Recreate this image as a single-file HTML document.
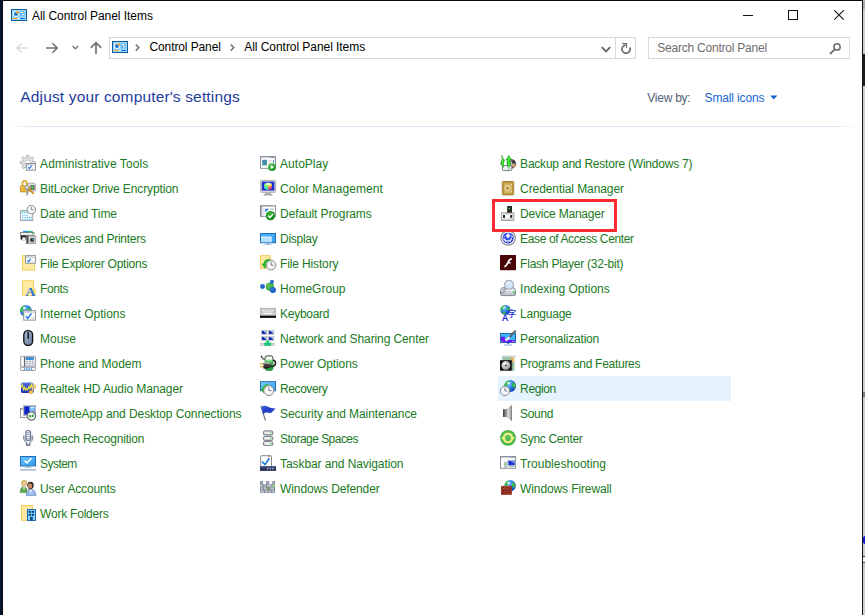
<!DOCTYPE html>
<html lang="en"><head><meta charset="utf-8"><title>All Control Panel Items</title>
<style>
html,body{margin:0;padding:0}
body{width:865px;height:615px;overflow:hidden;background:#fff;position:relative;font-family:"Liberation Sans", sans-serif;font-size:12px;line-height:16px;color:#000}
.abs,.t,.ic,.lbl{position:absolute}
.t,.lbl{white-space:nowrap}
.lbl{color:#1a7a24;height:16px}
.ic{width:16px;height:16px;overflow:visible}
svg{display:block;overflow:visible}
.box{position:absolute;box-sizing:border-box;border:1px solid #d9d9d9;background:#fff}

</style></head><body>
<div class="abs" style="left:0;top:0;width:2px;height:615px;background:#03142e"></div>
<div class="abs" style="left:2px;top:0;width:1px;height:615px;background:#0b0b0b"></div>
<div class="abs" style="left:2px;top:0;width:861px;height:1px;background:#0b0b0b"></div>
<div class="abs" style="left:862px;top:0;width:1px;height:615px;background:#151515"></div>
<div class="abs" style="left:863px;top:0;width:2px;height:615px;background:#cfcfcf"></div>
<div class="abs" style="left:863px;top:0;width:2px;height:9px;background:#a9a9a9"></div>
<div class="abs" style="left:863px;top:54px;width:2px;height:32px;background:#1c1e1c"></div>
<div class="abs" style="left:863px;top:392px;width:2px;height:5px;background:#7d7d7d"></div>
<div class="abs" style="left:863px;top:536px;width:2px;height:8px;background:#1414c8;border-radius:2px 0 0 2px"></div>
<div class="abs" style="left:863px;top:556px;width:2px;height:7px;background:#e8efe8;border-top:1px solid #155a22;border-bottom:1px solid #155a22;box-sizing:border-box"></div>
<div class="ic" style="left:11px;top:9px;height:12px"><svg width="16" height="12" viewBox="0 0 16 12"><rect x="0.5" y="0.5" width="15" height="11" fill="#8ed3fb" stroke="#0c5d9c"/><rect x="1.3" y="1.3" width="13.4" height="9.4" fill="none" stroke="#a8defc" stroke-width="0.6"/><circle cx="5" cy="4.9" r="2.9" fill="#f2f8fd"/><circle cx="5" cy="5" r="2" fill="#1b78d8"/><path d="M5.4 4.6V1.9a2.8 2.8 0 0 1 2.7 2.7z" fill="#ffa41c"/><rect x="8.8" y="2.2" width="4.8" height="4.6" fill="#6dbdf4"/><rect x="9.8" y="3" width="2.2" height="0.9" fill="#fff"/><rect x="12" y="3" width="1" height="0.9" fill="#ffa41c"/><rect x="10.6" y="5" width="2.4" height="0.9" fill="#fff"/><rect x="9.8" y="5" width="0.8" height="0.9" fill="#2a6cb8"/><rect x="2" y="9" width="5" height="1" fill="#ffa41c"/><rect x="7" y="9" width="2" height="1" fill="#fff"/><rect x="9" y="9" width="4.8" height="1" fill="#0f6ad4"/></svg></div>
<div class="t" style="left:32px;top:8px;letter-spacing:-0.053px">All Control Panel Items</div>
<svg class="abs" style="left:738px;top:5px" width="112" height="22" viewBox="738 5 112 22"><g stroke="#111" stroke-width="1" fill="none" shape-rendering="crispEdges"><path d="M743 15.5h10"/><rect x="788.5" y="10.5" width="9" height="9"/></g><path d="M834.3 10.3l9.4 9.4M843.7 10.3l-9.4 9.4" stroke="#111" stroke-width="1.1" fill="none"/></svg>
<svg class="abs" style="left:10px;top:38px" width="96" height="20" viewBox="10 38 96 20" fill="none" stroke-linecap="butt"><path d="M28 48H17.2M21.6 43.2L16.8 48l4.8 4.8" stroke="#dcdde0" stroke-width="1.5"/><path d="M46 48h10.8M52.4 43.2l4.8 4.8-4.8 4.8" stroke="#707070" stroke-width="1.5"/><path d="M72.6 46l2.8 2.8 2.8-2.8" stroke="#7a7a7a" stroke-width="1.3"/><path d="M96 54V43M90.8 47.9L96 42.7l5.2 5.2" stroke="#757575" stroke-width="1.75"/></svg>
<div class="box" style="left:109px;top:37px;width:527px;height:22px"></div>
<div class="ic" style="left:112px;top:41px;height:12px"><svg width="16" height="12" viewBox="0 0 16 12"><rect x="0.5" y="0.5" width="15" height="11" fill="#8ed3fb" stroke="#0c5d9c"/><rect x="1.3" y="1.3" width="13.4" height="9.4" fill="none" stroke="#a8defc" stroke-width="0.6"/><circle cx="5" cy="4.9" r="2.9" fill="#f2f8fd"/><circle cx="5" cy="5" r="2" fill="#1b78d8"/><path d="M5.4 4.6V1.9a2.8 2.8 0 0 1 2.7 2.7z" fill="#ffa41c"/><rect x="8.8" y="2.2" width="4.8" height="4.6" fill="#6dbdf4"/><rect x="9.8" y="3" width="2.2" height="0.9" fill="#fff"/><rect x="12" y="3" width="1" height="0.9" fill="#ffa41c"/><rect x="10.6" y="5" width="2.4" height="0.9" fill="#fff"/><rect x="9.8" y="5" width="0.8" height="0.9" fill="#2a6cb8"/><rect x="2" y="9" width="5" height="1" fill="#ffa41c"/><rect x="7" y="9" width="2" height="1" fill="#fff"/><rect x="9" y="9" width="4.8" height="1" fill="#0f6ad4"/></svg></div>
<svg class="abs" style="left:134px;top:43px" width="104" height="10" viewBox="134 43 104 10" fill="none" stroke="#767676" stroke-width="1.5"><path d="M135.8 44.6l3 3-3 3"/><path d="M230.8 44.6l3 3-3 3"/></svg>
<div class="t" style="left:149.5px;top:39px;letter-spacing:-0.110px">Control Panel</div>
<div class="t" style="left:244.3px;top:39px;letter-spacing:-0.053px">All Control Panel Items</div>
<div class="abs" style="left:615px;top:38px;width:1px;height:20px;background:#d9d9d9"></div>
<svg class="abs" style="left:600px;top:41px" width="34" height="14" viewBox="600 41 34 14" fill="none"><path d="M601.8 47.1l4.2 4.2 4.2-4.2" stroke="#686868" stroke-width="1.9"/><path d="M629.8 47.4A4.1 4.1 0 1 1 625.4 45.06" stroke="#6c6c6c" stroke-width="1.7"/><path d="M622.3 43.7H626.5V47.8" stroke="#6c6c6c" stroke-width="1.3"/></svg>
<div class="box" style="left:648px;top:37px;width:202px;height:22px"></div>
<div class="t" style="left:657.3px;top:40px;color:#6d6d6d;letter-spacing:-0.225px">Search Control Panel</div>
<svg class="abs" style="left:828px;top:42px" width="14" height="14" viewBox="828 42 14 14" fill="none" stroke="#6e6e6e"><circle cx="837" cy="46.9" r="3.1" stroke-width="1.6"/><path d="M834.7 49.4l-4.7 4.6" stroke-width="1.8"/></svg>
<div class="t" style="left:20.3px;top:87.4px;font-size:15.5px;line-height:20px;color:#1e3c9c;letter-spacing:0.150px">Adjust your computer's settings</div>
<div class="t" style="left:647.3px;top:90.3px;color:#4f5d73;letter-spacing:-0.249px">View by:</div>
<div class="t" style="left:704.6px;top:90.3px;color:#1567d3;letter-spacing:-0.146px">Small icons</div>
<svg class="abs" style="left:770px;top:95px" width="8" height="5" viewBox="0 0 8 5"><path d="M0.2 0.6h7.2L3.8 4.6z" fill="#1567d3"/></svg>
<div class="abs" style="left:3px;top:126px;width:859px;height:1px;background:linear-gradient(90deg,rgba(216,230,245,0) 0,rgba(216,230,245,0) 4px,#dbe8f6 30px,#dbe8f6 830px,rgba(216,230,245,0) 857px)"></div>
<div class="abs" style="left:498px;top:376px;width:233px;height:24.5px;background:#e5f3fe"></div>
<div class="ic" style="left:20px;top:155px"><svg width="16" height="16" viewBox="0 0 16 16"><path d="M15.09 6.43L15.09 8.97L12.86 8.91L12.23 10.42L13.85 11.96L12.06 13.75L10.52 12.13L9.01 12.76L9.07 14.99L6.53 14.99L6.59 12.76L5.08 12.13L3.54 13.75L1.75 11.96L3.37 10.42L2.74 8.91L0.51 8.97L0.51 6.43L2.74 6.49L3.37 4.98L1.75 3.44L3.54 1.65L5.08 3.27L6.59 2.64L6.53 0.41L9.07 0.41L9.01 2.64L10.52 3.27L12.06 1.65L13.85 3.44L12.23 4.98L12.86 6.49z" fill="#e4e4e4" stroke="#a6a6a6" stroke-width="0.8"/><circle cx="7.8" cy="7.7" r="2.7" fill="#fff" stroke="#b0b0b0" stroke-width="0.7"/><rect x="6.3" y="8.5" width="9.1" height="6.6" fill="#fff" stroke="#8a909b"/><rect x="6.8" y="9" width="8.1" height="1.5" fill="#c5cad3"/><rect x="13.299999999999999" y="8.9" width="1" height="0.9" fill="#fff"/><path d="M8.0 12.2l1.3 1.4l2.3-3" fill="none" stroke="#2a7be4" stroke-width="1.2"/><path d="M11.499999999999998 13.2h1.6" stroke="#a9aeb8" stroke-width="0.7"/></svg></div>
<div class="lbl" style="left:40.1px;top:156px;letter-spacing:0.087px">Administrative Tools</div>
<div class="ic" style="left:20px;top:180px"><svg width="16" height="16" viewBox="0 0 16 16"><defs><linearGradient id="i0_1a" x1="0" y1="0" x2="0" y2="1"><stop offset="0" stop-color="#f3c64a"/><stop offset="0.5" stop-color="#d99a12"/><stop offset="1" stop-color="#e8b73a"/></linearGradient></defs><rect x="7.6" y="3.2" width="8" height="8" rx="1.8" fill="#e1e1e1" stroke="#9a9a9a" stroke-width="0.8"/><rect x="10.4" y="5" width="4.2" height="5" rx="0.6" fill="#6f6f6f"/><rect x="11.7" y="5.8" width="1.4" height="3.2" fill="#36e23a"/><path d="M2.4 6.2V3.6a2.3 2.9 0 0 1 4.6 0V6.2" fill="none" stroke="#d8a324" stroke-width="1.6"/><path d="M3.2 6V3.8a1.5 2 0 0 1 1.2-1.9" fill="none" stroke="#f7dd83" stroke-width="0.6"/><rect x="0.3" y="5.8" width="8" height="6.2" rx="0.7" fill="url(#i0_1a)" stroke="#b07c10" stroke-width="0.6"/><path d="M0.7 7.6h7.2M0.7 9.8h7.2" stroke="#f9dc7a" stroke-width="0.7"/><path d="M9 9.2l4.6 4.6" stroke="#c98d18" stroke-width="1.7"/><circle cx="8.9" cy="8.6" r="1.5" fill="none" stroke="#c98d18" stroke-width="1.1"/><circle cx="7" cy="7.4" r="1.8" fill="#eef0f2" stroke="#7f8790" stroke-width="0.9"/><path d="M7 9v6.4M7 12.8h1.4" stroke="#7f8790" stroke-width="1.5"/><path d="M7 9.2v5.8" stroke="#e4e7ea" stroke-width="0.5"/></svg></div>
<div class="lbl" style="left:40.1px;top:181px;letter-spacing:-0.120px">BitLocker Drive Encryption</div>
<div class="ic" style="left:20px;top:205px"><svg width="16" height="16" viewBox="0 0 16 16"><rect x="0.5" y="5.6" width="12.2" height="10" fill="#fff" stroke="#a1a6ae"/><rect x="1" y="6.1" width="11.2" height="2.2" fill="#a9d9f1"/><rect x="2.3" y="9.7" width="1.2" height="1.1" fill="#43b4e6"/><rect x="4.5" y="9.7" width="1.2" height="1.1" fill="#43b4e6"/><rect x="6.7" y="9.7" width="1.2" height="1.1" fill="#43b4e6"/><rect x="2.3" y="11.8" width="1.2" height="1.1" fill="#43b4e6"/><rect x="4.5" y="11.8" width="1.2" height="1.1" fill="#43b4e6"/><rect x="6.7" y="11.8" width="1.2" height="1.1" fill="#43b4e6"/><rect x="8.9" y="11.8" width="1.2" height="1.1" fill="#43b4e6"/><rect x="10.6" y="11.8" width="1.2" height="1.1" fill="#43b4e6"/><rect x="2.3" y="13.7" width="1.2" height="1.1" fill="#43b4e6"/><rect x="4.5" y="13.7" width="1.2" height="1.1" fill="#43b4e6"/><rect x="6.7" y="13.7" width="1.2" height="1.1" fill="#43b4e6"/><rect x="8.9" y="13.7" width="1.2" height="1.1" fill="#43b4e6"/><rect x="10.6" y="13.7" width="1.2" height="1.1" fill="#43b4e6"/><circle cx="11.3" cy="4.7" r="4.3" fill="#f3f4f7" stroke="#878b96" stroke-width="1.0"/><circle cx="11.3" cy="4.7" r="3.1999999999999997" fill="#fbfbfd" stroke="#d6d8de" stroke-width="0.5"/><path d="M11.3 2.0000000000000004V4.7H13.400000000000002" fill="none" stroke="#5b5e68" stroke-width="0.8"/></svg></div>
<div class="lbl" style="left:40.1px;top:206px;letter-spacing:-0.096px">Date and Time</div>
<div class="ic" style="left:20px;top:230px"><svg width="16" height="16" viewBox="0 0 16 16"><rect x="3" y="0.8" width="5" height="2.6" fill="#2b8ff0"/><rect x="8" y="0.8" width="3.4" height="2.6" fill="#1fc455"/><rect x="11.4" y="0.8" width="1.2" height="2.6" fill="#2b8ff0"/><rect x="0.6" y="2.6" width="13.4" height="3" fill="#ededed" stroke="#6d6d6d" stroke-width="0.7"/><rect x="12" y="3.2" width="1.1" height="1.1" fill="#2fd13a"/><path d="M0.6 5.4h5.6v4.4h-2v-2.4h-1.6v2h-2z" fill="#1b1b1b"/><rect x="2.6" y="7.4" width="3" height="3.2" fill="#f4f4f4" stroke="#9a9a9a" stroke-width="0.4"/><rect x="6" y="5.2" width="2.3" height="8.6" fill="#4a4a4a"/><rect x="6.2" y="5.2" width="0.7" height="8.6" fill="#8b8b8b"/><rect x="8.5" y="6" width="7.2" height="7.6" rx="0.6" fill="#d4d4d4" stroke="#8a8a8a" stroke-width="0.8"/><circle cx="12.2" cy="9.9" r="2.5" fill="#2a2d30" stroke="#f1f1f1" stroke-width="0.7"/><circle cx="12.7" cy="9.5" r="0.9" fill="#2e9a8c"/></svg></div>
<div class="lbl" style="left:40.1px;top:231px;letter-spacing:-0.254px">Devices and Printers</div>
<div class="ic" style="left:20px;top:255px"><svg width="16" height="16" viewBox="0 0 16 16"><rect x="2.5" y="0.7" width="12" height="14.4" fill="#ffe9a3" stroke="#f6cd57"/><path d="M13.4 9v6" stroke="#fdf3cd" stroke-width="0.8"/><rect x="5.6" y="0.7" width="9.8" height="7.5" fill="#fff" stroke="#8a909b"/><rect x="6.1" y="1.2" width="8.8" height="1.5" fill="#c5cad3"/><rect x="13.3" y="1.1" width="1" height="0.9" fill="#fff"/><path d="M7.3 5.299999999999999l1.3 1.4l2.3-3" fill="none" stroke="#2a7be4" stroke-width="1.2"/><path d="M11.5 6.299999999999999h1.6" stroke="#a9aeb8" stroke-width="0.7"/></svg></div>
<div class="lbl" style="left:40.1px;top:256px;letter-spacing:-0.232px">File Explorer Options</div>
<div class="ic" style="left:20px;top:280px"><svg width="16" height="16" viewBox="0 0 16 16"><rect x="2.5" y="0.7" width="11" height="14.4" fill="#ffe9a3" stroke="#f6cd57"/><rect x="13.4" y="9" width="1.8" height="6.1" fill="#ffd976" stroke="#f6cd57" stroke-width="0.6"/><text x="5.6" y="15.6" font-family="Liberation Serif, serif" font-weight="bold" font-size="13.5" fill="#1b72dc">A</text></svg></div>
<div class="lbl" style="left:40.1px;top:281px;letter-spacing:-0.404px">Fonts</div>
<div class="ic" style="left:20px;top:305px"><svg width="16" height="16" viewBox="0 0 16 16"><defs><radialGradient id="i0_6g" cx="0.35" cy="0.3" r="0.8"><stop offset="0" stop-color="#9fd8ff"/><stop offset="0.45" stop-color="#2f86ee"/><stop offset="1" stop-color="#0b2fa8"/></radialGradient><clipPath id="i0_6c"><circle cx="5.9" cy="5.9" r="5.9"/></clipPath></defs><circle cx="5.9" cy="5.9" r="5.9" fill="url(#i0_6g)"/><g clip-path="url(#i0_6c)"><g transform="translate(5.9 5.9) scale(0.9833333333333334)"><path d="M-6 -1.5C-4.5 -4.5 -2.5 -5.5 -0.5 -5.2C-1.5 -3.5 -2.8 -2.8 -3 -1C-3.2 0.8 -4.5 1.2 -6 0.5z" fill="#35c23a"/><path d="M2.2 -3.2C3.8 -3.6 5.2 -2 5.6 0C5.2 1.8 4.2 2.6 3.4 1.6C2.6 0.4 1.6 -1.4 2.2 -3.2z" fill="#35c23a"/><path d="M-3.2 2.4C-1.8 2 -0.2 3 0.6 4.6C-0.6 5.8 -2.6 5.6 -3.6 4.4z" fill="#2fb83a"/><ellipse cx="-1.6" cy="-3" rx="1.5" ry="1" fill="#fff" opacity="0.85"/></g></g><rect x="3.7" y="5.7" width="11.7" height="9.4" fill="#fff" stroke="#8a909b"/><rect x="4.2" y="6.2" width="10.7" height="1.5" fill="#c5cad3"/><rect x="13.299999999999999" y="6.1000000000000005" width="1" height="0.9" fill="#fff"/><path d="M5.800000000000001 11.2l2 2.2l3.7-5" fill="none" stroke="#1c79e3" stroke-width="1.5"/><path d="M11.7 13.000000000000002h2" stroke="#9aa0aa" stroke-width="0.8"/></svg></div>
<div class="lbl" style="left:40.1px;top:306px;letter-spacing:0.001px">Internet Options</div>
<div class="ic" style="left:20px;top:330px"><svg width="16" height="16" viewBox="0 0 16 16"><defs><linearGradient id="i0_7a" x1="0" y1="0" x2="1" y2="1"><stop offset="0" stop-color="#b4c3d8"/><stop offset="0.5" stop-color="#8a9cb8"/><stop offset="1" stop-color="#65779a"/></linearGradient></defs><rect x="3.8" y="0.7" width="8.8" height="14.6" rx="3.7" ry="4.4" fill="url(#i0_7a)" stroke="#0e0e10" stroke-width="1.3"/><path d="M8.2 2.2v6.6" stroke="#17181c" stroke-width="1.5"/></svg></div>
<div class="lbl" style="left:40.1px;top:331px;letter-spacing:-0.033px">Mouse</div>
<div class="ic" style="left:20px;top:355px"><svg width="16" height="16" viewBox="0 0 16 16"><rect x="0.5" y="1.3" width="15" height="10.6" rx="1" fill="#e9eaec" stroke="#8b8e94" stroke-width="0.8"/><rect x="0.9" y="1.7" width="3.4" height="9.8" rx="0.9" fill="#fafafa" stroke="#a9acb2" stroke-width="0.6"/><path d="M4.6 2v9.5" stroke="#3b3d42" stroke-width="0.8"/><rect x="6" y="2.4" width="7.6" height="2.3" fill="#2c8be6" stroke="#1b5fb4" stroke-width="0.4"/><rect x="6.2" y="6" width="1.6" height="0.9" fill="#8c949e"/><rect x="9" y="6" width="1.6" height="0.9" fill="#8c949e"/><rect x="11.8" y="6" width="1.6" height="0.9" fill="#8c949e"/><rect x="6.2" y="8" width="1.6" height="0.9" fill="#8c949e"/><rect x="9" y="8" width="1.6" height="0.9" fill="#8c949e"/><rect x="11.8" y="8" width="1.6" height="0.9" fill="#8c949e"/><path d="M5.4 10.4h9.6" stroke="#9fc4ea" stroke-width="0.7"/><rect x="0.5" y="12.3" width="15" height="3.2" rx="0.8" fill="#f6f6f7" stroke="#84878d" stroke-width="0.8"/><rect x="4.2" y="13.2" width="0.9" height="1.7" fill="#2a86e0"/><rect x="5.9" y="13.2" width="0.9" height="1.7" fill="#2a86e0"/><rect x="7.6" y="13.2" width="0.9" height="1.7" fill="#2a86e0"/><rect x="9.3" y="13.2" width="0.9" height="1.7" fill="#2a86e0"/><rect x="11" y="13.2" width="0.9" height="1.7" fill="#2a86e0"/></svg></div>
<div class="lbl" style="left:40.1px;top:356px;letter-spacing:-0.000px">Phone and Modem</div>
<div class="ic" style="left:20px;top:380px"><svg width="16" height="16" viewBox="0 0 16 16"><defs><linearGradient id="i0_9a" x1="0" y1="0" x2="0" y2="1"><stop offset="0" stop-color="#5373ea"/><stop offset="0.4" stop-color="#2c46d4"/><stop offset="1" stop-color="#1a2fbc"/></linearGradient></defs><rect x="1" y="2.6" width="12.6" height="10.5" rx="1.6" fill="url(#i0_9a)"/><path d="M1.2 7.4l1.2-2.8l1.1 5l1.1-2.6l1 3.2l1.2-2l1 1.6l1.2-3.6l1 2.4l1.2-4.2l0.9 3.6" fill="none" stroke="#f3ea3c" stroke-width="1.1"/><path d="M11.6 3.6c2.6 0.2 4.2 2.2 3.8 5.2c-0.6-1.6-1.6-2.4-2.8-2.6l-0.4 5.6" fill="none" stroke="#efc867" stroke-width="1.3"/><ellipse cx="10.8" cy="12" rx="2.2" ry="1.6" fill="#f2c456" stroke="#c48a1a" stroke-width="0.5"/></svg></div>
<div class="lbl" style="left:40.1px;top:381px;letter-spacing:-0.110px">Realtek HD Audio Manager</div>
<div class="ic" style="left:20px;top:405px"><svg width="16" height="16" viewBox="0 0 16 16"><rect x="0.5" y="3.4" width="8" height="9" fill="#fdfdfd" stroke="#8c8c8c" stroke-width="0.9"/><rect x="1" y="3.9" width="7" height="1.2" fill="#c9c9c9"/><rect x="3.4" y="0.5" width="12.2" height="10" fill="#dfe3e8" stroke="#a9adb3" stroke-width="0.8"/><rect x="4.2" y="1.3" width="10.6" height="8.4" fill="#0d22c4"/><path d="M9.4 1.3h5.4v8.4h-3.2l-2.2-4z" fill="#79bdf6"/><rect x="10.4" y="2" width="3.8" height="1.2" fill="#d6ebfc"/><circle cx="11.4" cy="11" r="4.2" fill="#fbfbfb" stroke="#6f7276" stroke-width="1.2"/><path d="M8.8 12.2l2-1.4M8.9 10.4l1.9 0.4l-0.4 1.9M14 9.8l-2 1.4M13.9 11.6l-1.9-0.4l0.4-1.9" fill="none" stroke="#1b981f" stroke-width="0.9"/></svg></div>
<div class="lbl" style="left:40.1px;top:406px;letter-spacing:-0.085px">RemoteApp and Desktop Connections</div>
<div class="ic" style="left:20px;top:430px"><svg width="16" height="16" viewBox="0 0 16 16"><path d="M3.7 5.6v3c0 1.8 1.2 2.8 2.4 3.4l0.7 2.4h2.8l0.7-2.4c1.2-0.6 2.4-1.6 2.4-3.4v-3" fill="#f1f3f8" stroke="#63728f" stroke-width="1"/><path d="M5 6v2.6c0 1.2 0.8 2 1.6 2.4M11.4 6v2.6c0 1.2-0.8 2-1.6 2.4" fill="none" stroke="#8391ad" stroke-width="0.7"/><rect x="5.8" y="0.5" width="4.8" height="10" rx="2.2" fill="#fff" stroke="#63728f" stroke-width="1.1"/><path d="M5.9 2.8h4.6M5.9 4.8h4.6M5.9 6.8h4.6M5.9 8.8h4.6" stroke="#7b8aa7" stroke-width="0.9"/><rect x="6.5" y="14.3" width="3.4" height="1.3" fill="#fff" stroke="#63728f" stroke-width="0.8"/></svg></div>
<div class="lbl" style="left:40.1px;top:431px;letter-spacing:-0.178px">Speech Recognition</div>
<div class="ic" style="left:20px;top:455px"><svg width="16" height="16" viewBox="0 0 16 16"><defs><linearGradient id="i0_12a" x1="0" y1="0" x2="1" y2="1"><stop offset="0" stop-color="#6cc6ff"/><stop offset="1" stop-color="#2e9af0"/></linearGradient></defs><rect x="0.5" y="1.5" width="15" height="9.4" fill="url(#i0_12a)" stroke="#1f6db4"/><path d="M4.6 5.6l2.3 2.3l4.6-4.6" fill="none" stroke="#fff" stroke-width="1.5"/><rect x="6.6" y="11.4" width="2.8" height="0.9" fill="#5f8fc4"/><rect x="4.2" y="12.3" width="7.6" height="0.6" fill="#8fb0d6"/><rect x="0" y="14.3" width="16" height="1.2" fill="#8ea6c9"/></svg></div>
<div class="lbl" style="left:40.1px;top:456px;letter-spacing:-0.573px">System</div>
<div class="ic" style="left:20px;top:480px"><svg width="16" height="16" viewBox="0 0 16 16"><path d="M0.2 12.6c0-3.6 1.4-6 3.6-6s3.4 2.4 3.4 6z" fill="#5aa84c" stroke="#37782f" stroke-width="0.5"/><path d="M3 6.8l1 3.6l1-3.6z" fill="#eef2ea"/><circle cx="4.2" cy="3.2" r="3.1" fill="#cdb95e"/><ellipse cx="4.6" cy="3.8" rx="2" ry="2.5" fill="#ecc3a2"/><path d="M6.2 15.6c0-3.8 1.8-6.4 4.8-6.4s4.9 2.6 4.9 6.4z" fill="#9dbbe9" stroke="#5676b4" stroke-width="0.6"/><path d="M9.6 9.4l1.3 4l1.3-4z" fill="#f6f8fc"/><ellipse cx="10.5" cy="5.3" rx="3.2" ry="3.6" fill="#262626"/><ellipse cx="10" cy="6" rx="2.2" ry="2.8" fill="#c98a60"/><path d="M8.2 8c0.8 1.2 2.6 1.6 3.8 0.4" fill="none" stroke="#3a2a22" stroke-width="0.7"/></svg></div>
<div class="lbl" style="left:40.1px;top:481px;letter-spacing:-0.144px">User Accounts</div>
<div class="ic" style="left:20px;top:505px"><svg width="16" height="16" viewBox="0 0 16 16"><rect x="1.5" y="0.5" width="11" height="14.8" fill="#ffe9a3" stroke="#f6cd57"/><rect x="7.5" y="4.5" width="8" height="11" fill="#7fd5ff" stroke="#1e6bb2"/><rect x="8.6" y="5.9" width="2.3" height="1.9" fill="#0c3f78"/><rect x="11.7" y="5.9" width="2.3" height="1.9" fill="#0c3f78"/><rect x="8.6" y="8.8" width="2.3" height="1.9" fill="#0c3f78"/><rect x="11.7" y="8.8" width="2.3" height="1.9" fill="#0c3f78"/><rect x="10" y="11.8" width="2.8" height="3.6" fill="#15508e"/></svg></div>
<div class="lbl" style="left:40.1px;top:506px;letter-spacing:-0.226px">Work Folders</div>
<div class="ic" style="left:260px;top:155px"><svg width="16" height="16" viewBox="0 0 16 16"><defs><linearGradient id="i1_0a" x1="0" y1="0" x2="1" y2="1"><stop offset="0" stop-color="#3f86b8"/><stop offset="1" stop-color="#3f9a8a"/></linearGradient><radialGradient id="i1_0b" cx="0.4" cy="0.35" r="0.7"><stop offset="0" stop-color="#5fd25f"/><stop offset="1" stop-color="#12891a"/></radialGradient></defs><rect x="0.5" y="1.5" width="15" height="11.8" fill="#fff" stroke="#8a909b"/><rect x="1" y="2" width="14" height="1.4" fill="#d9dde3"/><rect x="10.2" y="2.1" width="0.9" height="0.9" fill="#6d737d"/><rect x="11.8" y="2.1" width="0.9" height="0.9" fill="#6d737d"/><rect x="13.4" y="2.1" width="0.9" height="0.9" fill="#6d737d"/><rect x="2.2" y="4.8" width="4.8" height="5.6" fill="url(#i1_0a)"/><path d="M8.4 5.8h3.4M8.4 7.8h2.4" stroke="#b4bac4" stroke-width="0.8"/><rect x="13" y="4.8" width="0.9" height="3" fill="#2c6fd0"/><circle cx="12" cy="12.1" r="3.9" fill="url(#i1_0b)"/><path d="M10.9 10.2v3.8l3.2-1.9z" fill="#fff"/></svg></div>
<div class="lbl" style="left:280.1px;top:156px;letter-spacing:0.017px">AutoPlay</div>
<div class="ic" style="left:260px;top:180px"><svg width="16" height="16" viewBox="0 0 16 16"><rect x="0.6" y="0.4" width="15" height="12" rx="0.8" fill="#dcdcdc" stroke="#a3a3a3" stroke-width="0.8"/><rect x="1.8" y="1.6" width="12.6" height="9" fill="#1b2fd2"/><path d="M4.4 4l3.4-1.4l4 1.2v4.6l-3.6 1.8l-3.8-1.6z" fill="#37d84a"/><path d="M4.4 4l3.8 1.4v4.8l-3.8-1.6z" fill="#4be0d0"/><path d="M4.4 4l3.8 1.4v2.2l-3.8-1z" fill="#7cf06a"/><path d="M8.2 5.4l3.6-1.6v4.6l-3.6 1.8z" fill="#f03a8a"/><path d="M8.2 5.4l3.6-1.6v2l-3.6 2z" fill="#f6e03a"/><path d="M4.4 4l3.4-1.4l4 1.2l-3.6 1.6z" fill="#eafbe0"/><rect x="5.4" y="12.4" width="5.4" height="1.6" fill="#b5b5b5"/><path d="M3.2 15.4c0.8-1.2 1.8-1.6 2.6-1.6h4.6c0.8 0 1.8 0.4 2.6 1.6z" fill="#a6a6a6"/></svg></div>
<div class="lbl" style="left:280.1px;top:181px;letter-spacing:0.039px">Color Management</div>
<div class="ic" style="left:260px;top:205px"><svg width="16" height="16" viewBox="0 0 16 16"><defs><radialGradient id="i1_2b" cx="0.4" cy="0.3" r="0.8"><stop offset="0" stop-color="#3fb83f"/><stop offset="1" stop-color="#0c7a14"/></radialGradient></defs><rect x="0.5" y="0.7" width="15" height="10.8" fill="#fdfdfd" stroke="#9298a2" stroke-width="0.9"/><rect x="0.2" y="0.4" width="1.4" height="11.4" fill="#7d838d"/><rect x="1" y="0.4" width="14.8" height="1" fill="#8d939d"/><rect x="13" y="0.5" width="1" height="0.7" fill="#fff"/><rect x="2.2" y="2.2" width="2.2" height="8.6" fill="#e3e6ea"/><path d="M5.2 3.8h3.8l-3.8 3.4z" fill="#1f78e0"/><path d="M10 4.2h4" stroke="#8f959f" stroke-width="0.8"/><circle cx="10.5" cy="10.6" r="4.7" fill="url(#i1_2b)"/><path d="M8.1 10.7l1.8 1.8l3.2-3.4" fill="none" stroke="#fff" stroke-width="1.5"/></svg></div>
<div class="lbl" style="left:280.1px;top:206px;letter-spacing:-0.115px">Default Programs</div>
<div class="ic" style="left:260px;top:230px"><svg width="16" height="16" viewBox="0 0 16 16"><defs><linearGradient id="i1_3m" x1="0" y1="0" x2="1" y2="1"><stop offset="0" stop-color="#4fb4fa"/><stop offset="1" stop-color="#33a0f4"/></linearGradient></defs><rect x="0.5" y="3.5" width="15" height="9.2" fill="url(#i1_3m)" stroke="#1f6db4"/><rect x="1.1" y="6.6" width="10.4" height="5.5" fill="#fff"/><rect x="1.1" y="7.4" width="9.5" height="4.7" fill="#b5defe"/><rect x="6.9" y="13.2" width="2.2" height="1" fill="#6f9ad0"/><rect x="4" y="14.4" width="8" height="0.7" fill="#8fb0d6"/></svg></div>
<div class="lbl" style="left:280.1px;top:231px;letter-spacing:-0.285px">Display</div>
<div class="ic" style="left:260px;top:255px"><svg width="16" height="16" viewBox="0 0 16 16"><rect x="0.5" y="0.7" width="9.8" height="12.6" fill="#ffe9a3" stroke="#f6cd57"/><path d="M9.8 5C6.2 4.6 4.2 7 4.6 10.4" fill="none" stroke="#2fb62f" stroke-width="2.6"/><path d="M1.4 8.8h6.6l-3.2 5z" fill="#2fb62f"/><circle cx="11.1" cy="10.2" r="4.8" fill="#f3f4f7" stroke="#878b96" stroke-width="1.0"/><circle cx="11.1" cy="10.2" r="3.6999999999999997" fill="#fbfbfd" stroke="#d6d8de" stroke-width="0.5"/><path d="M11.1 7.0V10.2H13.7" fill="none" stroke="#5b5e68" stroke-width="0.8"/></svg></div>
<div class="lbl" style="left:280.1px;top:256px;letter-spacing:-0.147px">File History</div>
<div class="ic" style="left:260px;top:280px"><svg width="16" height="16" viewBox="0 0 16 16"><defs><radialGradient id="i1_5a" cx="0.4" cy="0.35" r="0.75"><stop offset="0" stop-color="#63c763"/><stop offset="1" stop-color="#2a9a32"/></radialGradient><radialGradient id="i1_5b" cx="0.4" cy="0.35" r="0.75"><stop offset="0" stop-color="#2f7be0"/><stop offset="1" stop-color="#0f4fb6"/></radialGradient></defs><circle cx="9.9" cy="6.7" r="4.1" fill="url(#i1_5a)"/><circle cx="2.5" cy="6.5" r="2.45" fill="url(#i1_5b)"/><circle cx="11.9" cy="1.8" r="2" fill="url(#i1_5b)"/><circle cx="12.9" cy="9.9" r="3" fill="url(#i1_5b)"/></svg></div>
<div class="lbl" style="left:280.1px;top:281px;letter-spacing:0.003px">HomeGroup</div>
<div class="ic" style="left:260px;top:305px"><svg width="16" height="16" viewBox="0 0 16 16"><rect x="0.4" y="3.2" width="15.2" height="8" fill="#bdbdbd" stroke="#a3a3a3" stroke-width="0.6"/><rect x="1.6" y="4.6" width="1" height="1.1" fill="#fff"/><rect x="3.0" y="4.6" width="1" height="1.1" fill="#fff"/><rect x="4.5" y="4.6" width="1" height="1.1" fill="#fff"/><rect x="5.9" y="4.6" width="1" height="1.1" fill="#fff"/><rect x="7.4" y="4.6" width="1" height="1.1" fill="#fff"/><rect x="8.8" y="4.6" width="1" height="1.1" fill="#fff"/><rect x="10.3" y="4.6" width="1" height="1.1" fill="#fff"/><rect x="11.8" y="4.6" width="1" height="1.1" fill="#fff"/><rect x="13.2" y="4.6" width="1" height="1.1" fill="#fff"/><rect x="2.2" y="6.3" width="1" height="1.1" fill="#fff"/><rect x="3.7" y="6.3" width="1" height="1.1" fill="#fff"/><rect x="5.1" y="6.3" width="1" height="1.1" fill="#fff"/><rect x="6.5" y="6.3" width="1" height="1.1" fill="#fff"/><rect x="8.0" y="6.3" width="1" height="1.1" fill="#fff"/><rect x="9.4" y="6.3" width="1" height="1.1" fill="#fff"/><rect x="10.9" y="6.3" width="1" height="1.1" fill="#fff"/><rect x="12.4" y="6.3" width="1" height="1.1" fill="#fff"/><rect x="3.4" y="8.1" width="8.6" height="1.1" fill="#fff"/><rect x="1.6" y="8.1" width="1.2" height="1.1" fill="#fff"/><rect x="12.8" y="8.1" width="1.6" height="1.1" fill="#fff"/><rect x="0" y="10.8" width="16" height="2.1" fill="#0c0c0c"/></svg></div>
<div class="lbl" style="left:280.1px;top:306px;letter-spacing:-0.282px">Keyboard</div>
<div class="ic" style="left:260px;top:330px"><svg width="16" height="16" viewBox="0 0 16 16"><rect x="0" y="12.9" width="15" height="2.8" fill="#e3e3e3"/><rect x="0" y="12.9" width="15" height="0.9" fill="#c4c4c4"/><rect x="0" y="14.8" width="15" height="0.9" fill="#c4c4c4"/><rect x="1.2" y="0.2" width="5.8" height="4.5" fill="#d6d6d6" stroke="#b5b5b5" stroke-width="0.5"/><rect x="2.0" y="0.8999999999999999" width="4.2" height="3" fill="#1029b4"/><path d="M3.4000000000000004 0.8999999999999999h2.8v2.6z" fill="#a9d0f6"/><rect x="8.1" y="0.2" width="5.8" height="4.5" fill="#d6d6d6" stroke="#b5b5b5" stroke-width="0.5"/><rect x="8.9" y="0.8999999999999999" width="4.2" height="3" fill="#1029b4"/><path d="M10.3 0.8999999999999999h2.8v2.6z" fill="#a9d0f6"/><rect x="1.2" y="6.3" width="5.8" height="4.5" fill="#d6d6d6" stroke="#b5b5b5" stroke-width="0.5"/><rect x="2.0" y="7.0" width="4.2" height="3" fill="#1029b4"/><path d="M3.4000000000000004 7.0h2.8v2.6z" fill="#a9d0f6"/><rect x="8.1" y="6.3" width="5.8" height="4.5" fill="#d6d6d6" stroke="#b5b5b5" stroke-width="0.5"/><rect x="8.9" y="7.0" width="4.2" height="3" fill="#1029b4"/><path d="M10.3 7.0h2.8v2.6z" fill="#a9d0f6"/><path d="M7 10.2h1.4l1 2.5h1.7v3h-6.8v-3h1.7z" fill="#12c97a"/></svg></div>
<div class="lbl" style="left:280.1px;top:331px;letter-spacing:-0.101px">Network and Sharing Center</div>
<div class="ic" style="left:260px;top:355px"><svg width="16" height="16" viewBox="0 0 16 16"><defs><linearGradient id="i1_8a" x1="0" y1="0" x2="0" y2="1"><stop offset="0" stop-color="#ffffff"/><stop offset="0.24" stop-color="#f2f7f2"/><stop offset="0.3" stop-color="#58d066"/><stop offset="0.6" stop-color="#35b848"/><stop offset="1" stop-color="#1f9a30"/></linearGradient><linearGradient id="i1_8b" x1="0" y1="0" x2="0" y2="1"><stop offset="0" stop-color="#b5b5b5"/><stop offset="0.35" stop-color="#4a4a4a"/><stop offset="1" stop-color="#151515"/></linearGradient></defs><path d="M1 0.6C1.4 2.4 2.6 3.6 4.6 4.8" fill="none" stroke="#2b2b2b" stroke-width="1.2"/><rect x="5" y="0.8" width="8" height="14.7" rx="2.2" fill="url(#i1_8a)" stroke="#2a7a36" stroke-width="0.6"/><path d="M5 4.4V3a2.2 2.2 0 0 1 2.2-2.2h3.6a2.2 2.2 0 0 1 2.2 2.2V4.4" fill="none" stroke="#454a46" stroke-width="0.8"/><path d="M5.6 6.2c1.6-0.8 5.2-0.8 6.8 0" fill="none" stroke="#a9ecb0" stroke-width="0.8"/><path d="M12.8 5.2C16.6 5.6 16.4 10.6 12.6 11.4L10.4 11.8" fill="none" stroke="#262626" stroke-width="1.5"/><rect x="0" y="8.2" width="3.6" height="1.2" fill="#dba521"/><rect x="0" y="11.2" width="3.6" height="1.2" fill="#dba521"/><path d="M3.4 7.2h4.4l3.8 1.6v3l-3.8 1.8h-4.4z" fill="url(#i1_8b)"/><path d="M4 8h3.6l2.6 1" fill="none" stroke="#e6e6e6" stroke-width="0.6"/></svg></div>
<div class="lbl" style="left:280.1px;top:356px;letter-spacing:-0.088px">Power Options</div>
<div class="ic" style="left:260px;top:380px"><svg width="16" height="16" viewBox="0 0 16 16"><defs><linearGradient id="i1_9m" x1="0" y1="0" x2="1" y2="1"><stop offset="0" stop-color="#7fcfff"/><stop offset="1" stop-color="#2e9af0"/></linearGradient></defs><rect x="0.5" y="1.7" width="15" height="9" fill="url(#i1_9m)" stroke="#1f6db4"/><path d="M8.6 5.6C5.2 5.2 3.2 7.2 3.6 10.4" fill="none" stroke="#2fb62f" stroke-width="2.4"/><path d="M0.4 9h6.2l-2.8 4.6z" fill="#2fb62f"/><circle cx="8.8" cy="10.6" r="5" fill="#f3f4f7" stroke="#878b96" stroke-width="1.0"/><circle cx="8.8" cy="10.6" r="3.9" fill="#fbfbfd" stroke="#d6d8de" stroke-width="0.5"/><path d="M8.8 7.199999999999999V10.6H11.600000000000001" fill="none" stroke="#5b5e68" stroke-width="0.8"/></svg></div>
<div class="lbl" style="left:280.1px;top:381px;letter-spacing:-0.434px">Recovery</div>
<div class="ic" style="left:260px;top:405px"><svg width="16" height="16" viewBox="0 0 16 16"><defs><linearGradient id="i1_10a" x1="0" y1="0" x2="1" y2="1"><stop offset="0" stop-color="#3c62e6"/><stop offset="0.5" stop-color="#1f3cc4"/><stop offset="1" stop-color="#3e63dc"/></linearGradient></defs><path d="M0.9 0.8l4.6 14.8" stroke="#6e7680" stroke-width="1.2"/><path d="M1.4 2.2C3.4 0.4 5.6 0.4 7.6 1.4C10 2.6 12.6 3.6 15.9 3.4C13.6 5 12.2 7 11.2 8C9 8.4 7.4 7 5.6 7.6C4.6 8 3.8 8.8 3.4 9.6z" fill="url(#i1_10a)"/></svg></div>
<div class="lbl" style="left:280.1px;top:406px;letter-spacing:-0.080px">Security and Maintenance</div>
<div class="ic" style="left:260px;top:430px"><svg width="16" height="16" viewBox="0 0 16 16"><rect x="3.4" y="0.9" width="9.4" height="4" rx="1.9" fill="#ebecee" stroke="#868b96" stroke-width="1.2"/><rect x="10" y="2.4" width="1.4" height="1" fill="#35d63a"/><rect x="3.4" y="6.3" width="9.4" height="4" rx="1.9" fill="#ebecee" stroke="#868b96" stroke-width="1.2"/><rect x="10" y="7.8" width="1.4" height="1" fill="#35d63a"/><rect x="3.4" y="11.5" width="9.4" height="4" rx="1.9" fill="#ebecee" stroke="#868b96" stroke-width="1.2"/><rect x="10" y="13.0" width="1.4" height="1" fill="#35d63a"/></svg></div>
<div class="lbl" style="left:280.1px;top:431px;letter-spacing:-0.538px">Storage Spaces</div>
<div class="ic" style="left:260px;top:455px"><svg width="16" height="16" viewBox="0 0 16 16"><defs><linearGradient id="i1_12a" x1="0" y1="0" x2="0" y2="1"><stop offset="0" stop-color="#54648c"/><stop offset="1" stop-color="#0a1a44"/></linearGradient></defs><rect x="0.7" y="0.7" width="10.8" height="10.8" rx="0.6" fill="#fdfdfd" stroke="#868c97"/><rect x="8" y="0.7" width="2" height="0.9" fill="#e2412f"/><path d="M2.2 6.6l2.8 3l4.4-6.4" fill="none" stroke="#1b76e0" stroke-width="1.6"/><rect x="0" y="11" width="16" height="4.8" fill="url(#i1_12a)"/><rect x="7" y="13" width="1.5" height="1.4" fill="#aeb7cf"/><rect x="9.6" y="13" width="1.5" height="1.4" fill="#aeb7cf"/><rect x="12.2" y="13" width="1.5" height="1.4" fill="#aeb7cf"/></svg></div>
<div class="lbl" style="left:280.1px;top:456px;letter-spacing:-0.096px">Taskbar and Navigation</div>
<div class="ic" style="left:260px;top:480px"><svg width="16" height="16" viewBox="0 0 16 16"><path d="M0 0.9h3v3h3.2v-3h3v3h3.1v-3h2.7v12h-15z" fill="#7d8591"/><rect x="12" y="4" width="3" height="3" fill="#8f9a6c"/><rect x="7" y="7" width="2.9" height="3" fill="#84896a"/><rect x="0.7" y="1.5" width="1.70" height="1.9" fill="#a9b3c3"/><rect x="6.9" y="1.5" width="1.70" height="1.9" fill="#a9b3c3"/><rect x="13" y="1.5" width="1.40" height="1.9" fill="#a9b3c3"/><rect x="0.5" y="4.3" width="1.80" height="2.4" fill="#d0d3d6"/><rect x="3.4" y="4.3" width="2.80" height="2.4" fill="#b3bccb"/><rect x="7.2" y="4.3" width="4.20" height="2.4" fill="#bcc5d3"/><rect x="12.3" y="4.3" width="2.30" height="2.4" fill="#8fd294"/><rect x="0.7" y="7.300000000000001" width="2.30" height="2.4" fill="#b3bccb"/><rect x="4.1" y="7.300000000000001" width="2.30" height="2.4" fill="#c3cbd8"/><rect x="7.4" y="7.300000000000001" width="2.10" height="2.4" fill="#949a74"/><rect x="10.4" y="7.300000000000001" width="3.60" height="2.4" fill="#b9c2d1"/><rect x="0.5" y="10.3" width="3.40" height="2.4" fill="#bfc2c6"/><rect x="5" y="10.3" width="3.20" height="2.4" fill="#b9c2d1"/><rect x="9.1" y="10.3" width="1.90" height="2.4" fill="#c3c6ca"/><rect x="12" y="10.3" width="2.30" height="2.4" fill="#b3bccb"/></svg></div>
<div class="lbl" style="left:280.1px;top:481px;letter-spacing:-0.116px">Windows Defender</div>
<div class="ic" style="left:500px;top:155px"><svg width="16" height="16" viewBox="0 0 16 16"><defs><radialGradient id="i2_0a" cx="0.5" cy="0.5" r="0.5"><stop offset="0.15" stop-color="#f4f4f4"/><stop offset="0.45" stop-color="#a9a9a9"/><stop offset="1" stop-color="#4f4f4f"/></radialGradient><linearGradient id="i2_0b" x1="0" y1="0" x2="1" y2="0"><stop offset="0" stop-color="#18a618"/><stop offset="0.5" stop-color="#4cf03c"/><stop offset="1" stop-color="#18a618"/></linearGradient></defs><circle cx="11.6" cy="8.9" r="4.3" fill="url(#i2_0a)" stroke="#4a4a4a" stroke-width="0.5"/><path d="M11.6 8.9l3.9 1a4.3 4.3 0 0 1-1.6 2.6z" fill="#f0a23a"/><path d="M11.6 8.9l1.2-4.1a4.3 4.3 0 0 1 2.8 2.6z" fill="#2f2f2f"/><circle cx="11.6" cy="8.9" r="1" fill="#e9e9e9" stroke="#555" stroke-width="0.4"/><rect x="2.4" y="10.4" width="9.4" height="5.2" rx="1.4" fill="#e9e9eb" stroke="#6f7277" stroke-width="0.9"/><path d="M3.6 13.4c1.2-1.4 3-1.4 4.2 0" fill="none" stroke="#fff" stroke-width="1"/><rect x="8.3" y="13.4" width="1.2" height="1" fill="#2fd13a"/><path d="M1.4 0.4C2.8 2.2 3.4 3.2 3.4 4.8h1.2L3.4 9c0.5 1.3 0.4 2.3-0.3 3.6C2.4 11 0.8 10 0.8 8.4C0.8 7 1.8 6.4 1.6 4.8h0.8C2.4 3.4 1.8 2.2 1.4 0.4z" fill="url(#i2_0b)" stroke="#128c12" stroke-width="0.5"/><path d="M8.8 0.4l3 4.6h-1.5c-0.2 2.2 0.5 3.4 0 5.2c-0.4 1.2-1.5 2-2.5 2.4c0.5-1.8-0.7-3.6-0.7-5.4c0-0.8 0.2-1.4 0.4-2.2h-1.5z" fill="url(#i2_0b)" stroke="#128c12" stroke-width="0.5"/></svg></div>
<div class="lbl" style="left:520.1px;top:156px;letter-spacing:-0.219px">Backup and Restore (Windows 7)</div>
<div class="ic" style="left:500px;top:180px"><svg width="16" height="16" viewBox="0 0 16 16"><rect x="2.3" y="1.5" width="11.4" height="13.4" rx="0.8" fill="#c9a550" stroke="#a07c22" stroke-width="0.9"/><rect x="3.7" y="2.9" width="8.6" height="10.6" fill="#d3b260" stroke="#ad8a30" stroke-width="0.6"/><circle cx="7.6" cy="8.2" r="2.5" fill="#c39d46" stroke="#f4ead0" stroke-width="1"/><circle cx="7.6" cy="8.2" r="1.1" fill="#9c7a26" stroke="#e3d19a" stroke-width="0.4"/><rect x="10.9" y="3.9" width="0.9" height="1.3" fill="#f3ead0"/><rect x="10.9" y="11" width="0.9" height="1.3" fill="#f3ead0"/></svg></div>
<div class="lbl" style="left:520.1px;top:181px;letter-spacing:-0.089px">Credential Manager</div>
<div class="ic" style="left:500px;top:205px"><svg width="16" height="16" viewBox="0 0 16 16"><defs><linearGradient id="i2_2a" x1="0" y1="0" x2="0" y2="1"><stop offset="0" stop-color="#cfcfcf"/><stop offset="0.5" stop-color="#f4f4f4"/><stop offset="1" stop-color="#c4c4c4"/></linearGradient></defs><rect x="7.2" y="1" width="4.8" height="7" fill="#262626"/><path d="M5.6 7.6l1.6-1v1z" fill="#555"/><circle cx="9.4" cy="3.5" r="0.7" fill="#3cf03c"/><rect x="1.3" y="7.9" width="12.6" height="7.6" fill="url(#i2_2a)" stroke="#8d8d8d" stroke-width="0.7"/><rect x="3" y="10.1" width="2" height="2.7" fill="#1c1c1c"/><rect x="10.2" y="10.1" width="2" height="2.7" fill="#1c1c1c"/><rect x="5.4" y="9.6" width="4.4" height="3.6" fill="#fbfbfb"/></svg></div>
<div class="lbl" style="left:520.1px;top:206px;letter-spacing:-0.210px">Device Manager</div>
<div class="ic" style="left:500px;top:230px"><svg width="16" height="16" viewBox="0 0 16 16"><defs><radialGradient id="i2_3a" cx="0.45" cy="0.4" r="0.7"><stop offset="0" stop-color="#4468f0"/><stop offset="1" stop-color="#1a2fc4"/></radialGradient></defs><circle cx="8.1" cy="8" r="7.2" fill="#fff" stroke="#83868e" stroke-width="1.2"/><circle cx="8.1" cy="8" r="5.6" fill="url(#i2_3a)"/><path d="M8.1 2.6v4M6.2 5l1.9 2.2L10 5" fill="none" stroke="#fff" stroke-width="1.3"/><path d="M3.6 8.2c1 2 3 3 4.6 2.8c1.8-0.2 3-1.2 3.6-2.6" fill="none" stroke="#fff" stroke-width="1.2"/><path d="M4 6.2l0.6 0.8M11.4 5.4l1.2 1.4l-1.4 0.6M5 11.4l0.8-0.6M8 12.8v-1M10.8 11.8l-0.6-0.8" fill="none" stroke="#fff" stroke-width="0.9"/></svg></div>
<div class="lbl" style="left:520.1px;top:231px;letter-spacing:-0.375px">Ease of Access Center</div>
<div class="ic" style="left:500px;top:255px"><svg width="16" height="16" viewBox="0 0 16 16"><rect x="0" y="0" width="16" height="15" fill="#490506"/><rect x="0.6" y="15" width="15" height="0.6" fill="#b9a3a3"/><path d="M4.4 11.6c2-0.4 2.6-2 3.4-4c0.8-2.2 1.8-3.6 4-3.8" fill="none" stroke="#fff" stroke-width="1.7"/><path d="M7.6 7.8h3" stroke="#fff" stroke-width="1.5"/></svg></div>
<div class="lbl" style="left:520.1px;top:256px;letter-spacing:-0.232px">Flash Player (32-bit)</div>
<div class="ic" style="left:500px;top:280px"><svg width="16" height="16" viewBox="0 0 16 16"><defs><linearGradient id="i2_5a" x1="0" y1="0" x2="0" y2="1"><stop offset="0" stop-color="#e6e9ec"/><stop offset="1" stop-color="#bfc4ca"/></linearGradient></defs><path d="M0.5 10.4l1.6-2.6h11.8l1.6 2.6v4c0 0.8-0.5 1.2-1.2 1.2h-12.6c-0.7 0-1.2-0.4-1.2-1.2z" fill="url(#i2_5a)" stroke="#737a83" stroke-width="0.9"/><path d="M0.8 10.4h14.4" stroke="#f6f7f8" stroke-width="0.8"/><rect x="13.4" y="11.3" width="1.3" height="2.4" fill="#2fc43a"/><path d="M6 8.4l-4.4 5.2" stroke="#70767f" stroke-width="2.2"/><path d="M6 8.4l-4.2 5" stroke="#f1f2f4" stroke-width="1"/><circle cx="9" cy="4.8" r="4.4" fill="#d3e6fa" stroke="#a3aab8" stroke-width="1.1"/><path d="M6.4 3.6c0.8-1.4 2.4-2 3.8-1.6" fill="none" stroke="#fff" stroke-width="0.9"/></svg></div>
<div class="lbl" style="left:520.1px;top:281px;letter-spacing:-0.027px">Indexing Options</div>
<div class="ic" style="left:500px;top:305px"><svg width="16" height="16" viewBox="0 0 16 16"><defs><radialGradient id="i2_6g" cx="0.35" cy="0.3" r="0.8"><stop offset="0" stop-color="#9fd8ff"/><stop offset="0.45" stop-color="#2f86ee"/><stop offset="1" stop-color="#0b2fa8"/></radialGradient><clipPath id="i2_6c"><circle cx="5.4" cy="4.9" r="5"/></clipPath></defs><circle cx="5.4" cy="4.9" r="5" fill="url(#i2_6g)"/><g clip-path="url(#i2_6c)"><g transform="translate(5.4 4.9) scale(0.8333333333333334)"><path d="M-6 -1.5C-4.5 -4.5 -2.5 -5.5 -0.5 -5.2C-1.5 -3.5 -2.8 -2.8 -3 -1C-3.2 0.8 -4.5 1.2 -6 0.5z" fill="#35c23a"/><path d="M2.2 -3.2C3.8 -3.6 5.2 -2 5.6 0C5.2 1.8 4.2 2.6 3.4 1.6C2.6 0.4 1.6 -1.4 2.2 -3.2z" fill="#35c23a"/><path d="M-3.2 2.4C-1.8 2 -0.2 3 0.6 4.6C-0.6 5.8 -2.6 5.6 -3.6 4.4z" fill="#2fb83a"/><ellipse cx="-1.6" cy="-3" rx="1.5" ry="1" fill="#fff" opacity="0.85"/></g></g><text x="1.8" y="15.7" font-family="Liberation Sans, sans-serif" font-weight="bold" font-size="9.2" fill="#1b2fc8">A</text><text x="7.2" y="11.9" font-family="Noto Sans CJK SC, WenQuanYi Zen Hei, sans-serif" font-weight="500" font-size="9" fill="#2735cf">字</text></svg></div>
<div class="lbl" style="left:520.1px;top:306px;letter-spacing:-0.249px">Language</div>
<div class="ic" style="left:500px;top:330px"><svg width="16" height="16" viewBox="0 0 16 16"><rect x="0.5" y="3.5" width="15" height="9" fill="#41b4ff" stroke="#1f6db4"/><path d="M1 6.8h3.8v3.2h10.2v2.2h-14z" fill="#6a12f2"/><rect x="1.4" y="10.9" width="0.9" height="0.8" fill="#fff"/><rect x="12" y="10.9" width="0.9" height="0.8" fill="#fff"/><rect x="13.6" y="10.9" width="0.9" height="0.8" fill="#fff"/><path d="M15.6 0.6l-6.4 6.8" stroke="#4b5461" stroke-width="2"/><path d="M15 0.6l-6 6.4" stroke="#8c95a3" stroke-width="0.6"/><path d="M9.4 7.2l-3.4 3.2" stroke="#f6f6f6" stroke-width="2.2"/><path d="M6.4 10.2l-1 0.8" stroke="#d9d9d9" stroke-width="1.2"/><rect x="6.9" y="13" width="2.2" height="1" fill="#4f86c6"/><rect x="4" y="14.6" width="8" height="0.8" fill="#6f98cc"/></svg></div>
<div class="lbl" style="left:520.1px;top:331px;letter-spacing:-0.208px">Personalization</div>
<div class="ic" style="left:500px;top:355px"><svg width="16" height="16" viewBox="0 0 16 16"><defs><radialGradient id="i2_8a" cx="0.4" cy="0.35" r="0.7"><stop offset="0" stop-color="#fafafa"/><stop offset="0.6" stop-color="#bdbdbd"/><stop offset="1" stop-color="#7c7c7c"/></radialGradient></defs><path d="M1.8 0.6l1 1.6h11.6l1.2-1.6" fill="#d9d9d9" stroke="#b9b9b9" stroke-width="0.5"/><rect x="2.4" y="1.8" width="12.4" height="13.8" fill="#cfd3cf"/><rect x="2.4" y="2" width="9" height="4" fill="#9cc3a0"/><path d="M11 3l2.4-0.8c1 1 1.4 2.8 1 4.6l-2.6 1z" fill="#f0b04a"/><rect x="11.8" y="7" width="3" height="8.6" fill="#7fae86"/><rect x="13.6" y="2" width="1.2" height="13.6" fill="#e6e6e6"/><rect x="0" y="5.2" width="11.8" height="10.5" fill="#0e0e0e"/><circle cx="5.9" cy="10.5" r="4.5" fill="url(#i2_8a)"/><circle cx="5.9" cy="10.5" r="1.1" fill="#3a4454"/></svg></div>
<div class="lbl" style="left:520.1px;top:356px;letter-spacing:-0.283px">Programs and Features</div>
<div class="ic" style="left:500px;top:380px"><svg width="16" height="16" viewBox="0 0 16 16"><defs><radialGradient id="i2_9g" cx="0.35" cy="0.3" r="0.8"><stop offset="0" stop-color="#9fd8ff"/><stop offset="0.45" stop-color="#2f86ee"/><stop offset="1" stop-color="#0b2fa8"/></radialGradient><clipPath id="i2_9c"><circle cx="10.1" cy="6" r="5.9"/></clipPath></defs><circle cx="10.1" cy="6" r="5.9" fill="url(#i2_9g)"/><g clip-path="url(#i2_9c)"><g transform="translate(10.1 6) scale(0.9833333333333334)"><path d="M-6 -1.5C-4.5 -4.5 -2.5 -5.5 -0.5 -5.2C-1.5 -3.5 -2.8 -2.8 -3 -1C-3.2 0.8 -4.5 1.2 -6 0.5z" fill="#35c23a"/><path d="M2.2 -3.2C3.8 -3.6 5.2 -2 5.6 0C5.2 1.8 4.2 2.6 3.4 1.6C2.6 0.4 1.6 -1.4 2.2 -3.2z" fill="#35c23a"/><path d="M-3.2 2.4C-1.8 2 -0.2 3 0.6 4.6C-0.6 5.8 -2.6 5.6 -3.6 4.4z" fill="#2fb83a"/><ellipse cx="-1.6" cy="-3" rx="1.5" ry="1" fill="#fff" opacity="0.85"/></g></g><circle cx="4.9" cy="10.9" r="4.7" fill="#f3f4f7" stroke="#878b96" stroke-width="1.0"/><circle cx="4.9" cy="10.9" r="3.6" fill="#fbfbfd" stroke="#d6d8de" stroke-width="0.5"/><path d="M4.9 7.800000000000001V10.9H7.400000000000001" fill="none" stroke="#5b5e68" stroke-width="0.8"/></svg></div>
<div class="lbl" style="left:520.1px;top:381px;letter-spacing:-0.376px">Region</div>
<div class="ic" style="left:500px;top:405px"><svg width="16" height="16" viewBox="0 0 16 16"><defs><linearGradient id="i2_10a" x1="0" y1="0" x2="1" y2="0"><stop offset="0" stop-color="#7b7b7b"/><stop offset="0.35" stop-color="#e1e1e1"/><stop offset="0.8" stop-color="#a9a9a9"/><stop offset="1" stop-color="#6d6d6d"/></linearGradient><linearGradient id="i2_10b" x1="0" y1="0" x2="1" y2="0"><stop offset="0" stop-color="#3d3d3d"/><stop offset="1" stop-color="#8d8d8d"/></linearGradient></defs><path d="M5.8 4.4L11.3 0.2h0.7v15.6h-0.7L5.8 11.8z" fill="url(#i2_10a)"/><rect x="3" y="4.2" width="3" height="7.8" fill="url(#i2_10b)"/></svg></div>
<div class="lbl" style="left:520.1px;top:406px;letter-spacing:-0.326px">Sound</div>
<div class="ic" style="left:500px;top:430px"><svg width="16" height="16" viewBox="0 0 16 16"><defs><radialGradient id="i2_11a" cx="0.45" cy="0.4" r="0.7"><stop offset="0" stop-color="#62c25a"/><stop offset="1" stop-color="#3fae40"/></radialGradient></defs><circle cx="8" cy="7.9" r="7.9" fill="url(#i2_11a)"/><path d="M3.85 6.8A4.3 4.3 0 0 1 12.2 7.1" fill="none" stroke="#f4ef86" stroke-width="2"/><path d="M10.1 6.9h4.8l-2.4 3.3z" fill="#f4ef86"/><path d="M12.15 9A4.3 4.3 0 0 1 3.8 8.7" fill="none" stroke="#f4ef86" stroke-width="2"/><path d="M1.1 8.9h4.8l-2.4-3.3z" fill="#f4ef86"/></svg></div>
<div class="lbl" style="left:520.1px;top:431px;letter-spacing:-0.338px">Sync Center</div>
<div class="ic" style="left:500px;top:455px"><svg width="16" height="16" viewBox="0 0 16 16"><rect x="0.5" y="1.5" width="15" height="11.8" fill="#fff" stroke="#8a909b"/><rect x="1" y="2" width="14" height="1.4" fill="#d4d8df"/><rect x="10.2" y="2" width="0.9" height="0.8" fill="#8a909b"/><rect x="11.8" y="2" width="0.9" height="0.8" fill="#8a909b"/><rect x="13.4" y="2" width="0.9" height="0.8" fill="#8a909b"/><rect x="7.6" y="5.2" width="7.6" height="6" fill="#c9ccd2" stroke="#a1a6ae" stroke-width="0.5"/><rect x="8.4" y="5.9" width="6.2" height="4.2" fill="#1a30d8"/><path d="M10.6 5.9h4v2.8z" fill="#6f9df0"/><rect x="10.6" y="11.2" width="2.6" height="0.9" fill="#9aa0a8"/><rect x="4.6" y="7" width="1.8" height="5.6" fill="#c2c5ca" stroke="#9a9ea6" stroke-width="0.4"/><rect x="4.9" y="8.4" width="1.2" height="1.6" fill="#35dc3a"/></svg></div>
<div class="lbl" style="left:520.1px;top:456px;letter-spacing:0.020px">Troubleshooting</div>
<div class="ic" style="left:500px;top:480px"><svg width="16" height="16" viewBox="0 0 16 16"><defs><radialGradient id="i2_13g" cx="0.35" cy="0.3" r="0.8"><stop offset="0" stop-color="#9fd8ff"/><stop offset="0.45" stop-color="#2f86ee"/><stop offset="1" stop-color="#0b2fa8"/></radialGradient><clipPath id="i2_13c"><circle cx="10.1" cy="5.7" r="5.7"/></clipPath></defs><circle cx="10.1" cy="5.7" r="5.7" fill="url(#i2_13g)"/><g clip-path="url(#i2_13c)"><g transform="translate(10.1 5.7) scale(0.9500000000000001)"><path d="M-6 -1.5C-4.5 -4.5 -2.5 -5.5 -0.5 -5.2C-1.5 -3.5 -2.8 -2.8 -3 -1C-3.2 0.8 -4.5 1.2 -6 0.5z" fill="#35c23a"/><path d="M2.2 -3.2C3.8 -3.6 5.2 -2 5.6 0C5.2 1.8 4.2 2.6 3.4 1.6C2.6 0.4 1.6 -1.4 2.2 -3.2z" fill="#35c23a"/><path d="M-3.2 2.4C-1.8 2 -0.2 3 0.6 4.6C-0.6 5.8 -2.6 5.6 -3.6 4.4z" fill="#2fb83a"/><ellipse cx="-1.6" cy="-3" rx="1.5" ry="1" fill="#fff" opacity="0.85"/></g></g><rect x="1" y="5.9" width="10.9" height="9" fill="#ad4330"/><path d="M1 8.1h10.9" stroke="#5e150c" stroke-width="0.6"/><path d="M1 10.3h10.9" stroke="#5e150c" stroke-width="0.6"/><path d="M1 12.6h10.9" stroke="#5e150c" stroke-width="0.6"/><path d="M3.6 5.9v2.2" stroke="#5e150c" stroke-width="0.6"/><path d="M7.2 5.9v2.2" stroke="#5e150c" stroke-width="0.6"/><path d="M10.2 5.9v2.2" stroke="#5e150c" stroke-width="0.6"/><path d="M2.2 8.1v2.2" stroke="#5e150c" stroke-width="0.6"/><path d="M5.4 8.1v2.2" stroke="#5e150c" stroke-width="0.6"/><path d="M8.8 8.1v2.2" stroke="#5e150c" stroke-width="0.6"/><path d="M3.6 10.3v2.2" stroke="#5e150c" stroke-width="0.6"/><path d="M7.2 10.3v2.2" stroke="#5e150c" stroke-width="0.6"/><path d="M10.2 10.3v2.2" stroke="#5e150c" stroke-width="0.6"/><path d="M2.2 12.6v2.2" stroke="#5e150c" stroke-width="0.6"/><path d="M5.4 12.6v2.2" stroke="#5e150c" stroke-width="0.6"/><path d="M8.8 12.6v2.2" stroke="#5e150c" stroke-width="0.6"/><path d="M1.4 6.4h2M4 6.4h2.8M7.6 6.4h2.2M2.6 8.6h2.4M5.8 8.6h2.6" stroke="#d0705a" stroke-width="0.5"/></svg></div>
<div class="lbl" style="left:520.1px;top:481px;letter-spacing:-0.114px">Windows Firewall</div>
<div class="abs" style="left:492px;top:199px;width:125px;height:32.5px;box-sizing:border-box;border:3px solid #fa2b30"></div>
</body></html>
